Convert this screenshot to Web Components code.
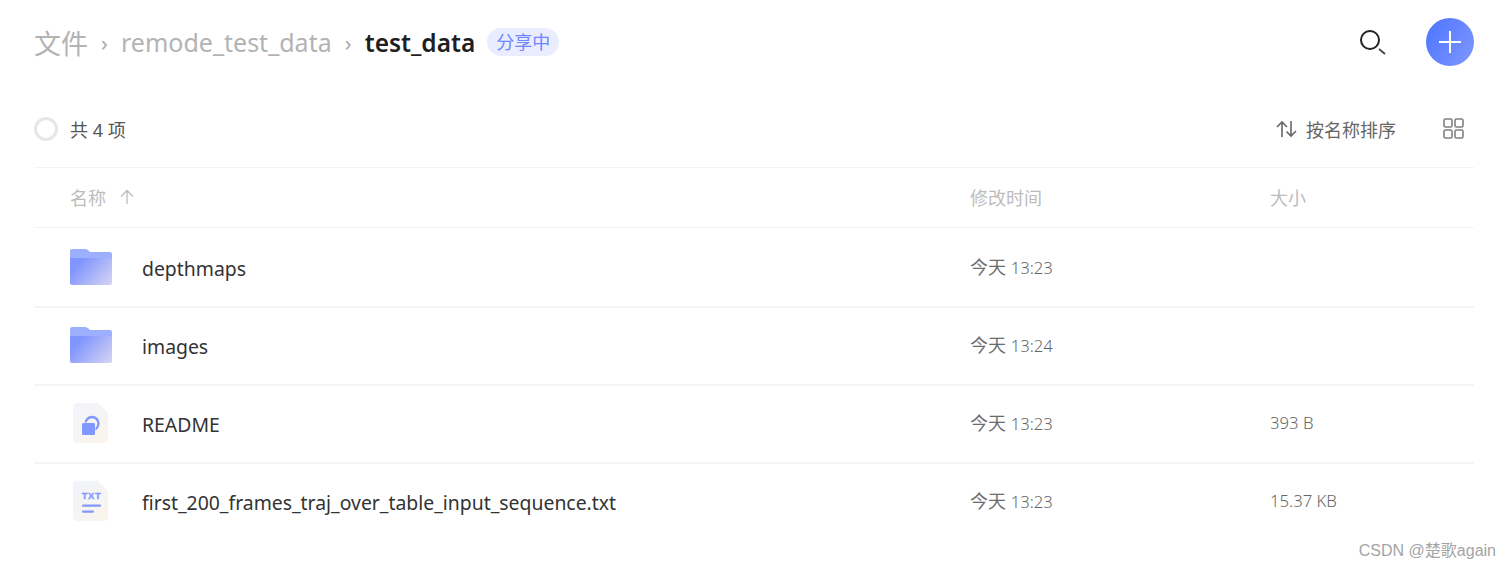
<!DOCTYPE html>
<html lang="zh">
<head>
<meta charset="utf-8">
<title>test_data</title>
<style>
  html, body { margin: 0; height: 100%; background: #fff; overflow: hidden; }
  body { font-family: "Noto Sans", "Noto Sans CJK SC", sans-serif; }
</style>
</head>
<body>
<drive-page>
  <drive-header></drive-header>
  <drive-toolbar count="4"></drive-toolbar>
  <drive-list-head></drive-list-head>
  <drive-row type="folder" name="depthmaps" time="13:23" first></drive-row>
  <drive-row type="folder" name="images" time="13:24"></drive-row>
  <drive-row type="readme" name="README" time="13:23" size="393 B"></drive-row>
  <drive-row type="txt" name="first_200_frames_traj_over_table_input_sequence.txt" time="13:23" size="15.37 KB" last></drive-row>
</drive-page>
<water-mark>CSDN @楚歌again</water-mark>

<script>
const FONT = '"Noto Sans", "Noto Sans CJK SC", sans-serif';

/* PAGE */
class DrivePage extends HTMLElement {
  connectedCallback() {
    this.attachShadow({ mode: "open" }).innerHTML = `
      <style>
        :host { display: flex; flex-direction: column; padding: 0 36px 0 34px; font-family: ${FONT}; }
      </style>
      <slot></slot>`;
  }
}

/* HEADER */
class DriveHeader extends HTMLElement {
  connectedCallback() {
    this.attachShadow({ mode: "open" }).innerHTML = `
      <style>
        :host { display: flex; align-items: center; height: 84px; }
        .crumbs { display: flex; align-items: center; flex: 1; color: #b3b3b3; }
        .root { font-size: 27px; }
        .mid { font-size: 25px; }
        .sep { font-size: 22px; width: 33px; text-align: center; color: #a8a8a8; }
        .cur { color: #1f1f1f; font-weight: 600; font-size: 24.500px; }
        .badge { margin-left: 12px; height: 28px; line-height: 28px; padding: 0 9px; border-radius: 14px; background: #e9edff; color: #6f86ff; font-size: 18px; }
        .search { display: block; margin-right: 40px; }
        .add { width: 48px; height: 48px; border-radius: 50%; display: flex; align-items: center; justify-content: center;
               background: linear-gradient(120deg, #4d74ff, #7f98ff); }
      </style>
      <div class="crumbs">
        <span class="root">文件</span><span class="sep">›</span>
        <span class="mid">remode_test_data</span><span class="sep">›</span>
        <span class="cur">test_data</span><span class="badge">分享中</span>
      </div>
      <svg class="search" width="28" height="28" viewBox="0 0 28 28" fill="none" stroke="#222">
        <circle cx="12" cy="12" r="9" stroke-width="2"/>
        <path d="M21 21L27 26" stroke="#444" stroke-width="1.800"/>
      </svg>
      <div class="add">
        <svg width="22" height="22" viewBox="0 0 22 22" stroke="#fff" stroke-width="2"><path d="M0 11H22M11 0V22"/></svg>
      </div>`;
  }
}

/* TOOLBAR */
class DriveToolbar extends HTMLElement {
  connectedCallback() {
    this.attachShadow({ mode: "open" }).innerHTML = `
      <style>
        :host { display: flex; align-items: center; height: 77px; padding-top: 6px; border-bottom: 1px solid #f3f3f3; color: #555; font-size: 18px; }
        .check { width: 18px; height: 18px; border: 3px solid #e6e6e6; border-radius: 50%; margin-right: 12px; }
        .count { flex: 1; }
        .sort { display: flex; align-items: center; gap: 9px; margin-right: 47px; color: #666; }
        .grid { margin-right: 10px; }
      </style>
      <span class="check"></span>
      <span class="count">共 ${this.getAttribute("count")} 项</span>
      <span class="sort">
        <svg width="21" height="18" viewBox="0 0 21 18" fill="none" stroke="#666" stroke-width="1.600">
          <path d="M6 17V2M1 7L6 2L11 7M15 1V16M10.500 11.500L15 16L20 11"/>
        </svg>
        按名称排序
      </span>
      <svg class="grid" width="21" height="21" viewBox="0 0 21 21" fill="none" stroke="#808080" stroke-width="1.600">
        <rect x="1" y="1" width="8" height="8" rx="1.500"/><rect x="12" y="1" width="8" height="8" rx="1.500"/>
        <rect x="1" y="12" width="8" height="8" rx="1.500"/><rect x="12" y="12" width="8" height="8" rx="1.500"/>
      </svg>`;
  }
}

/* COLUMN HEAD */
class DriveListHead extends HTMLElement {
  connectedCallback() {
    this.attachShadow({ mode: "open" }).innerHTML = `
      <style>
        :host { display: grid; grid-template-columns: 936px 300px 1fr; align-items: center; height: 57px; padding-bottom: 2px;
                border-bottom: 1px solid #f3f3f3; color: #bcbcbc; font-size: 18px; }
        .name { display: flex; align-items: center; gap: 14px; padding-left: 36px; }
      </style>
      <div class="name">名称
        <svg width="14" height="16" viewBox="0 0 14 16" fill="none" stroke="#bcbcbc" stroke-width="1.300"><path d="M7 15V1.500M1 7.500L7 1.500L13 7.500"/></svg>
      </div>
      <div>修改时间</div>
      <div>大小</div>`;
  }
}

/* FILE ROW */
const ICONS = {
  folder: `<svg width="42" height="36" viewBox="0 0 42 36">
      <defs>
        <linearGradient id="fb" x1="0" y1="0.200" x2="1" y2="0.800"><stop offset="0.150" stop-color="#7f95ff"/><stop offset="1" stop-color="#d0cff2"/></linearGradient>
      </defs>
      <path d="M2 0H15Q17 0 18.500 1.500L20 3H40Q42 3 42 5V12H0V2Q0 0 2 0Z" fill="#9db0ff"/>
      <path d="M0 9H42V34Q42 36 40 36H2Q0 36 0 34Z" fill="url(#fb)"/>
    </svg>`,
  readme: `<svg width="36" height="40" viewBox="0 0 36 40">
      <defs>
        <linearGradient id="pr" x1="0" y1="0" x2="1" y2="1"><stop offset="0" stop-color="#f1f5fc"/><stop offset="1" stop-color="#fbf4ec"/></linearGradient>
      </defs>
      <path d="M5 0H25L35 10V35Q35 40 30 40H5Q0 40 0 35V5Q0 0 5 0Z" fill="url(#pr)"/>
      <circle cx="19" cy="20.500" r="6.500" fill="none" stroke="#8199ff" stroke-width="2.400"/>
      <rect x="9" y="20" width="13" height="12" rx="1.500" fill="#8199ff" stroke="#f5f5f7" stroke-width="1" paint-order="stroke"/>
    </svg>`,
  txt: `<svg width="36" height="40" viewBox="0 0 36 40">
      <defs>
        <linearGradient id="pt" x1="0" y1="0" x2="1" y2="1"><stop offset="0" stop-color="#f0f4fc"/><stop offset="1" stop-color="#fbf4ec"/></linearGradient>
      </defs>
      <path d="M5 0H25L35 10V35Q35 40 30 40H5Q0 40 0 35V5Q0 0 5 0Z" fill="url(#pt)"/>
      <text x="18.500" y="18" text-anchor="middle" font-size="9.500" font-weight="700" letter-spacing="0.600" fill="#8199ff" stroke="#8199ff" stroke-width="0.300" font-family="Liberation Sans, sans-serif">TXT</text>
      <rect x="9" y="23.500" width="19" height="2.200" rx="1" fill="#8199ff"/>
      <rect x="9" y="29.500" width="12" height="2.200" rx="1" fill="#8199ff"/>
    </svg>`
};

class DriveRow extends HTMLElement {
  connectedCallback() {
    const type = this.getAttribute("type");
    const size = this.getAttribute("size") || "";
    const first = this.hasAttribute("first");
    this.attachShadow({ mode: "open" }).innerHTML = `
      <style>
        :host { display: grid; grid-template-columns: 936px 300px 1fr; align-items: center; height: ${first ? 78 : 76}px;
                border-bottom: 2px solid ${this.hasAttribute("last") ? "transparent" : "#f5f5f5"}; }
        .name { display: flex; align-items: center; color: #333; font-size: 19.400px; }
        .label { padding-top: ${first ? 2 : 1}px; }
        .icon { width: 108px; padding: 0 0 ${first ? 0 : 2}px ${type === "folder" ? 36 : 39}px; box-sizing: border-box; }
        svg { display: block; }
        .meta { color: #6c6c6c; font-size: 18px; padding-bottom: ${first ? 2 : 4}px; }
        .num { font-size: 16.700px; font-weight: 300; color: #666; }
      </style>
      <div class="name"><span class="icon">${ICONS[type]}</span><span class="label">${this.getAttribute("name")}</span></div>
      <div class="meta">今天 <span class="num">${this.getAttribute("time")}</span></div>
      <div class="meta"><span class="num">${size}</span></div>`;
  }
}

/* WATERMARK */
class WaterMark extends HTMLElement {
  connectedCallback() {
    this.attachShadow({ mode: "open" }).innerHTML = `
      <style>
        :host { position: absolute; right: 14px; bottom: 8px; color: #a4a4a4; font: 16px ${'"Liberation Sans", "Noto Sans CJK SC", sans-serif'}; }
      </style>
      <slot></slot>`;
  }
}

customElements.define("drive-page", DrivePage);
customElements.define("drive-header", DriveHeader);
customElements.define("drive-toolbar", DriveToolbar);
customElements.define("drive-list-head", DriveListHead);
customElements.define("drive-row", DriveRow);
customElements.define("water-mark", WaterMark);
</script>
</body>
</html>
